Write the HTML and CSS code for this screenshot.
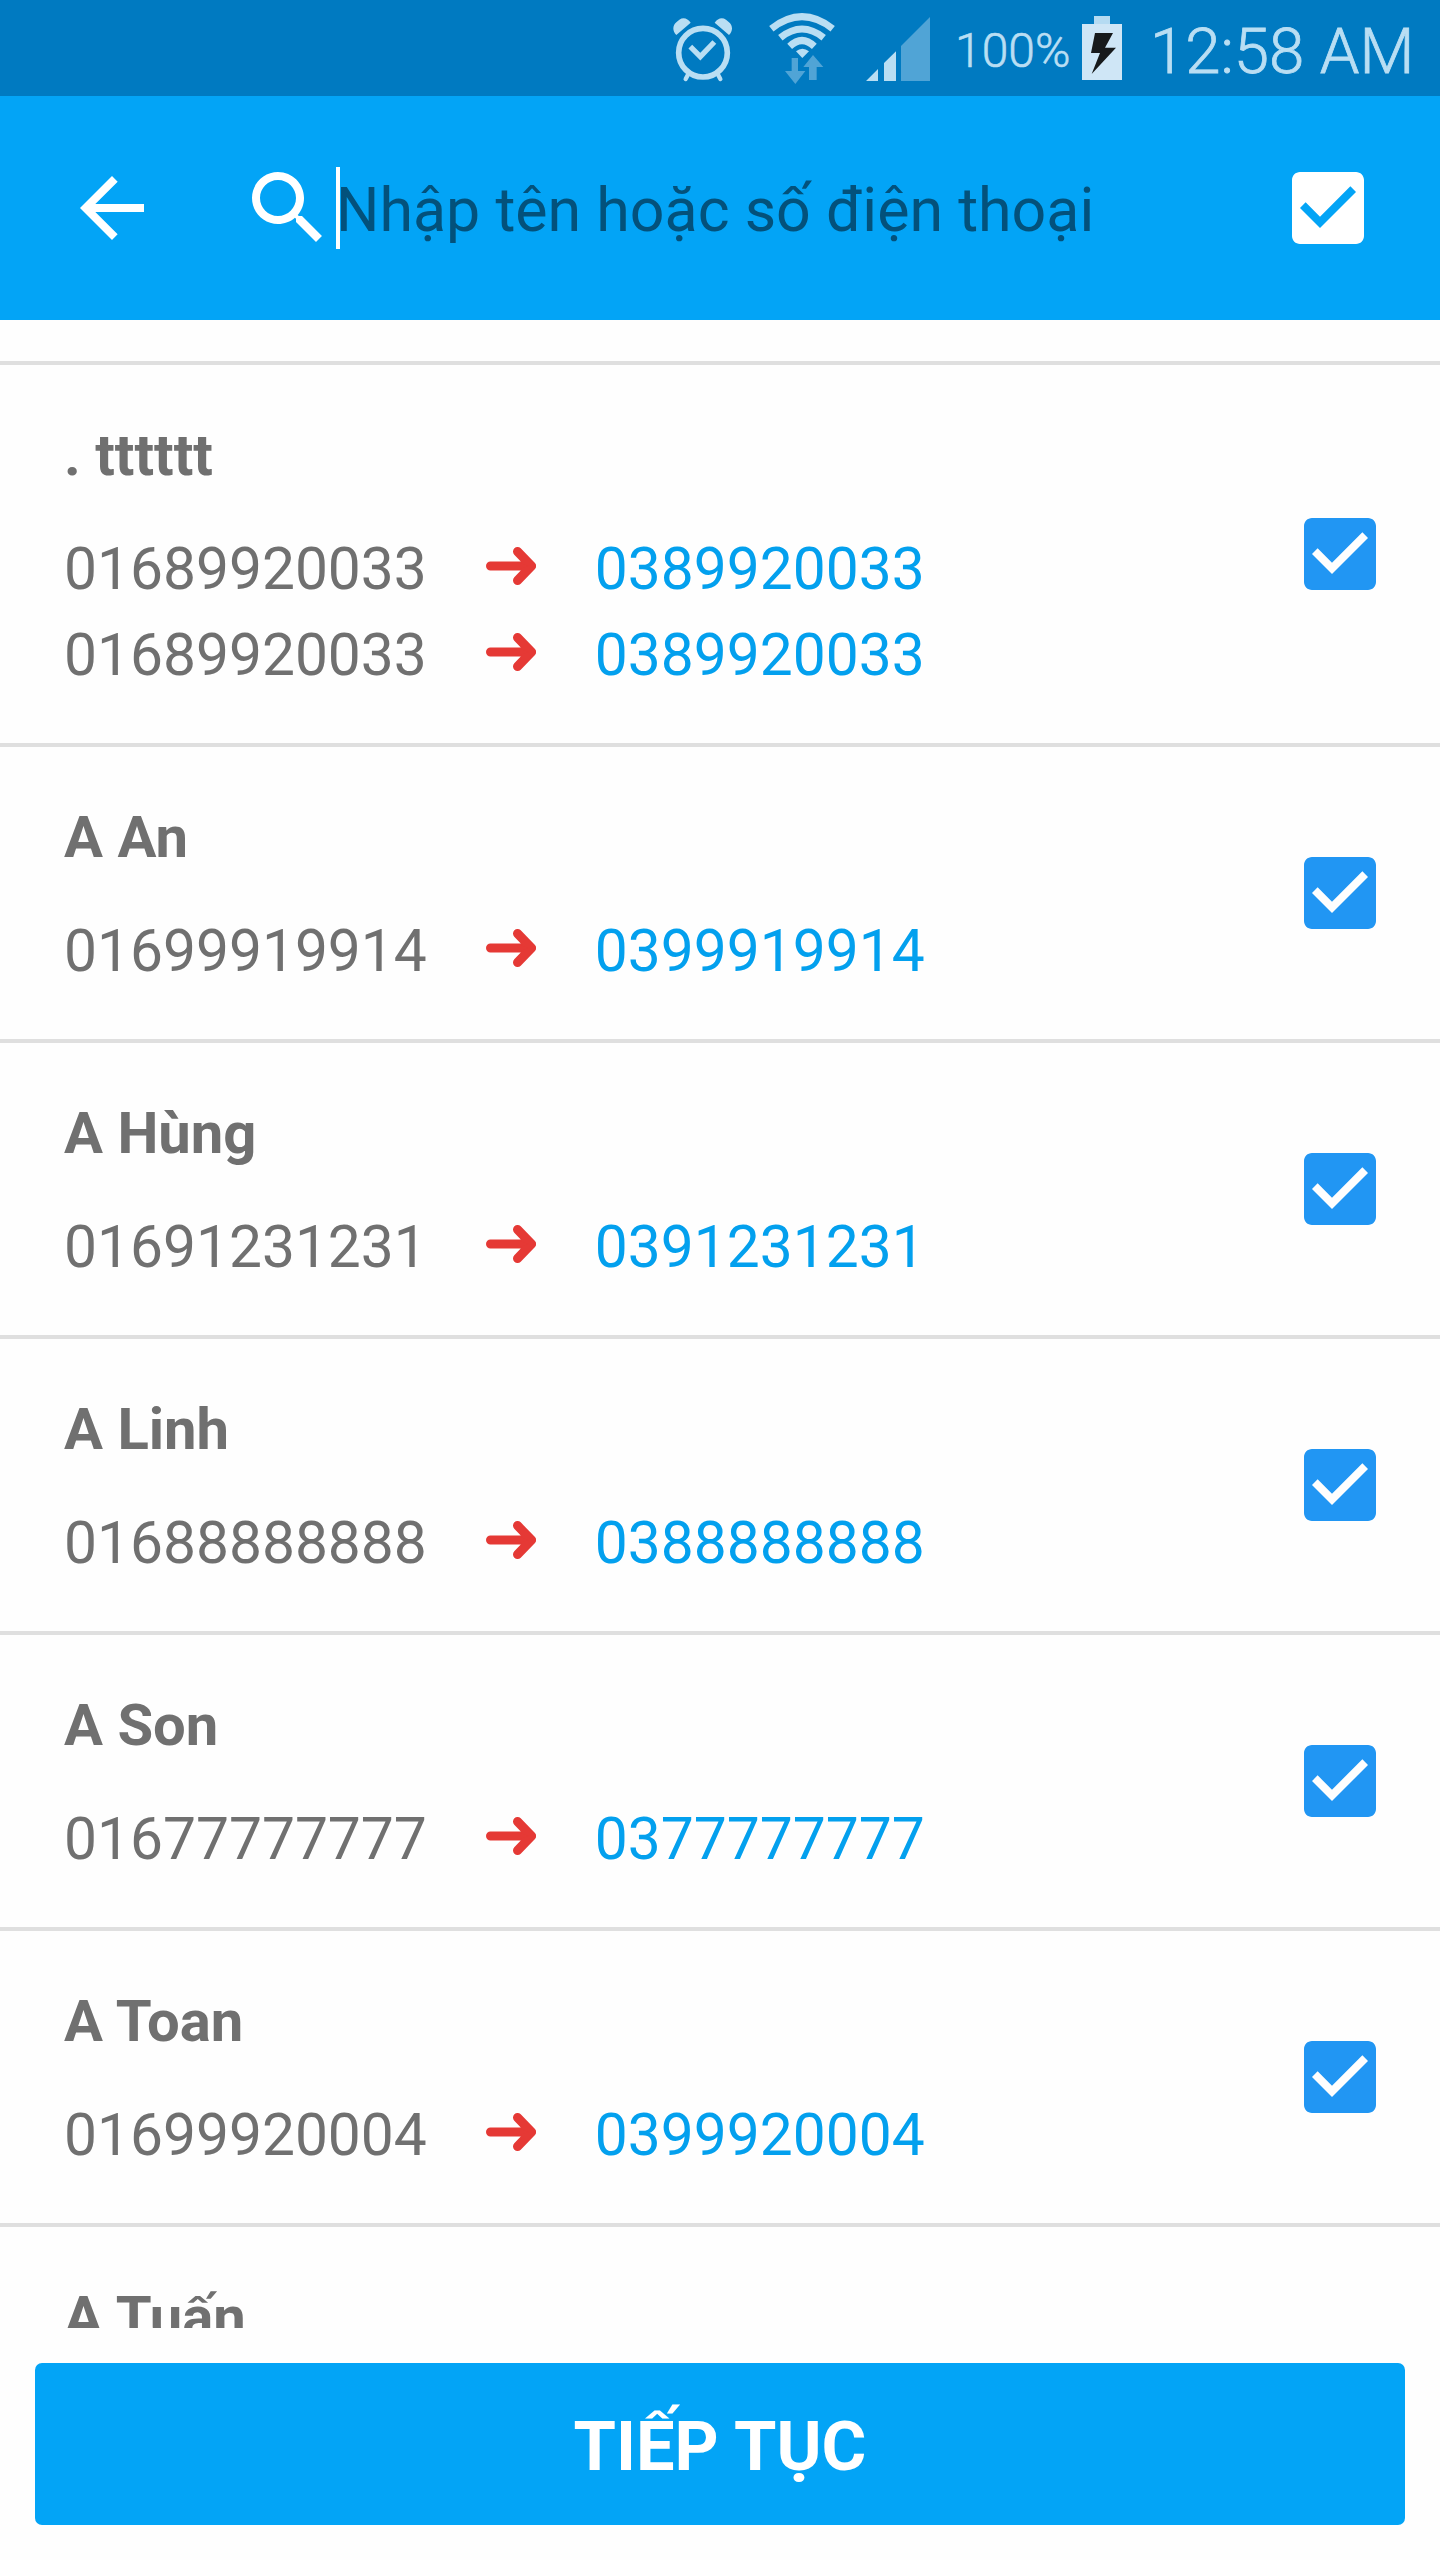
FILE: index.html
```html
<!DOCTYPE html>
<html lang="vi">
<head>
  <meta charset="UTF-8">
  <title>Chuyển đổi danh bạ</title>
  <link rel="stylesheet" href="styles.css">
</head>
<body>

  <!-- icons used more than once -->
  <svg class="defs" width="0" height="0">
    <symbol id="check" viewBox="3 3 18 18">
      <path d="M19 3H5c-1.11 0-2 .9-2 2v14c0 1.1.89 2 2 2h14c1.11 0 2-.9 2-2V5c0-1.1-.89-2-2-2zm-9 14l-5-5 1.41-1.41L10 14.17l7.59-7.59L19 8l-9 9z"/>
    </symbol>
    <symbol id="arrow" viewBox="0 0 50 38">
      <path d="M4.5 19H44M31.500 4.500L45.500 19L31.500 33.500" fill="none" stroke="currentColor" stroke-width="9" stroke-linecap="round" stroke-linejoin="round"/>
      <path d="M31 15L43 19L31 23z" fill="currentColor"/>
    </symbol>
  </svg>

  <div class="status-bar">
    <svg class="alarm" viewBox="99 0 180 288">
      <g fill="none" stroke="currentColor">
        <circle cx="189" cy="158" r="73" stroke-width="17"/>
        <path d="M151 140L181 170L223 126" stroke-width="16"/>
        <path d="M145 222L137 237M233 222L241 237" stroke-width="13" stroke-linecap="round"/>
      </g>
      <path d="M109 105C96 91 98 77 109 67L118 59C130 51 143 55 152 68zM267 105C280 91 278 77 267 67L258 59C246 51 233 55 224 68z" fill="currentColor"/>
    </svg>
    <svg class="wifi" viewBox="384 0 204 288">
      <g fill="none" stroke="currentColor" stroke-width="21">
        <path d="M394 86Q486 14 578 86"/>
        <path d="M421 113Q486 61 551 113"/>
        <path d="M449 139Q486 104 523 139"/>
      </g>
      <path d="M468 154Q487 139 507 154L487 174z" fill="currentColor"/>
      <path class="dim" d="M455 174H474V213H496L466 252L435 213H455zM519 165L550 201H530V240H507V201H490z"/>
    </svg>
    <svg class="signal" viewBox="675 0 198 288">
      <path d="M678 243L714 207V243zM732 189L768 154V243H732z" fill="currentColor"/>
      <path class="dim" d="M783 138L870 51V243H783z"/>
    </svg>
    <span class="percent">100%</span>
    <svg class="battery" viewBox="126 0 120 288">
      <path d="M162 48H210V72H162z" fill="#b5dbf2"/>
      <path d="M126 72H246V240H126z" fill="#cfe6f6"/>
      <path d="M165 99H219L195 143H228L155 222L180 159H153z" fill="#171a1c"/>
    </svg>
    <span class="clock">12:58 AM</span>
  </div>

  <div class="toolbar">
    <svg class="icon back" viewBox="0 0 24 24"><path d="M20 11H7.83l5.59-5.59L12 4l-8 8 8 8 1.41-1.41L7.83 13H20v-2z"/></svg>
    <svg class="icon" viewBox="0 0 24 24"><path d="M15.5 14h-.79l-.28-.27C15.41 12.59 16 11.11 16 9.5 16 5.91 13.09 3 9.5 3S3 5.91 3 9.5 5.91 16 9.5 16c1.61 0 3.09-.59 4.23-1.57l.27.28v.79l5 4.99L20.49 19l-4.99-5zm-6 0C7.01 14 5 11.99 5 9.5S7.01 5 9.5 5 14 7.01 14 9.5 11.99 14 9.5 14z"/></svg>
    <span class="cursor"></span>
    <span class="hint">Nhập tên hoặc số điện thoại</span>
    <svg class="checkbox"><use href="#check"/></svg>
  </div>

  <div class="list">
    <div class="contact">
      <div class="info">
        <h2>. tttttt</h2>
        <p><span>01689920033</span><svg class="arrow"><use href="#arrow"/></svg><span class="new">0389920033</span></p>
        <p><span>01689920033</span><svg class="arrow"><use href="#arrow"/></svg><span class="new">0389920033</span></p>
      </div>
      <svg class="checkbox"><use href="#check"/></svg>
    </div>
    <div class="contact">
      <div class="info">
        <h2>A An</h2>
        <p><span>01699919914</span><svg class="arrow"><use href="#arrow"/></svg><span class="new">0399919914</span></p>
      </div>
      <svg class="checkbox"><use href="#check"/></svg>
    </div>
    <div class="contact">
      <div class="info">
        <h2>A Hùng</h2>
        <p><span>01691231231</span><svg class="arrow"><use href="#arrow"/></svg><span class="new">0391231231</span></p>
      </div>
      <svg class="checkbox"><use href="#check"/></svg>
    </div>
    <div class="contact">
      <div class="info">
        <h2>A Linh</h2>
        <p><span>01688888888</span><svg class="arrow"><use href="#arrow"/></svg><span class="new">0388888888</span></p>
      </div>
      <svg class="checkbox"><use href="#check"/></svg>
    </div>
    <div class="contact">
      <div class="info">
        <h2>A Son</h2>
        <p><span>01677777777</span><svg class="arrow"><use href="#arrow"/></svg><span class="new">0377777777</span></p>
      </div>
      <svg class="checkbox"><use href="#check"/></svg>
    </div>
    <div class="contact">
      <div class="info">
        <h2>A Toan</h2>
        <p><span>01699920004</span><svg class="arrow"><use href="#arrow"/></svg><span class="new">0399920004</span></p>
      </div>
      <svg class="checkbox"><use href="#check"/></svg>
    </div>
    <div class="contact">
      <div class="info">
        <h2>A Tuấn</h2>
      </div>
    </div>
  </div>

  <button class="next">TIẾP TỤC</button>

</body>
</html>
```

FILE: styles.css
```css
* {
  box-sizing: border-box;
}
body {
  margin: 0;
  height: 2560px;
  display: flex;
  flex-direction: column;
  overflow: hidden;
  background: #fefefe;
  font-family: Roboto, sans-serif;
}
svg {
  display: block;
  flex-shrink: 0;
}
.defs {
  position: absolute;
}

/* status bar */
.status-bar {
  display: flex;
  flex-shrink: 0;
  height: 96px;
  padding-right: 27px;
  justify-content: flex-end;
  background: #007ac1;
  color: #b9def3;
  white-space: nowrap;
}
.status-bar svg {
  height: 96px;
}
.dim {
  fill: #50a4d6;
}
.alarm {
  width: 60px;
}
.wifi {
  width: 68px;
  margin-left: 35px;
}
.signal {
  width: 66px;
  margin-left: 29px;
}
.percent {
  width: 127px;
  margin-left: 24px;
  font-size: 48px;
  font-weight: 300;
  line-height: 101px;
  -webkit-text-stroke: 0.6px currentColor;
}
.battery {
  width: 40px;
}
.clock {
  width: 263px;
  margin-left: 28px;
  font-size: 63.5px;
  font-weight: 300;
  line-height: 104px;
  -webkit-text-stroke: 0.8px currentColor;
}

/* search toolbar */
.toolbar {
  display: flex;
  flex-shrink: 0;
  align-items: center;
  height: 224px;
  padding: 0 76px 0 64px;
  background: #03a4f6;
  color: #fff;
}
.icon {
  width: 96px;
  height: 96px;
  fill: currentColor;
}
.back {
  margin-right: 80px;
}
.cursor {
  width: 4px;
  height: 82px;
  margin-right: -4px;
  background: #fff;
}
.hint {
  flex: 1;
  font-size: 60.9px;
  line-height: 72px;
  padding-top: 6px;
  color: #03517b;
  white-space: nowrap;
}
.checkbox {
  width: 72px;
  height: 72px;
  fill: currentColor;
}

/* contact list */
.list {
  flex-shrink: 0;
  height: 1967px;
  margin-top: 41px;
  overflow: hidden;
  border-top: 4px solid #dfdfdf;
}
.contact {
  display: flex;
  align-items: center;
  justify-content: space-between;
  padding: 54px 64px 48px;
  border-bottom: 4px solid #dfdfdf;
  color: #707070;
}
.contact .checkbox {
  color: #2196f3;
  margin-top: -6px;
}
.contact h2 {
  margin: 0 0 18px;
  height: 86px;
  font-size: 58px;
  font-weight: 700;
  line-height: 72px;
}
.contact p {
  display: flex;
  align-items: center;
  gap: 59px;
  height: 86px;
  margin: 0;
  font-size: 58.7px;
}
.contact p span {
  padding-top: 6px;
}
.arrow {
  width: 50px;
  height: 38px;
  color: #e53935;
}
.new {
  color: #03a0ee;
}

.next {
  height: 162px;
  margin: 35px 35px 0;
  padding: 4px 0 0;
  border: none;
  border-radius: 7px;
  background: #03a4f6;
  color: #fff;
  font: 700 68.5px Roboto, sans-serif;
}
```
